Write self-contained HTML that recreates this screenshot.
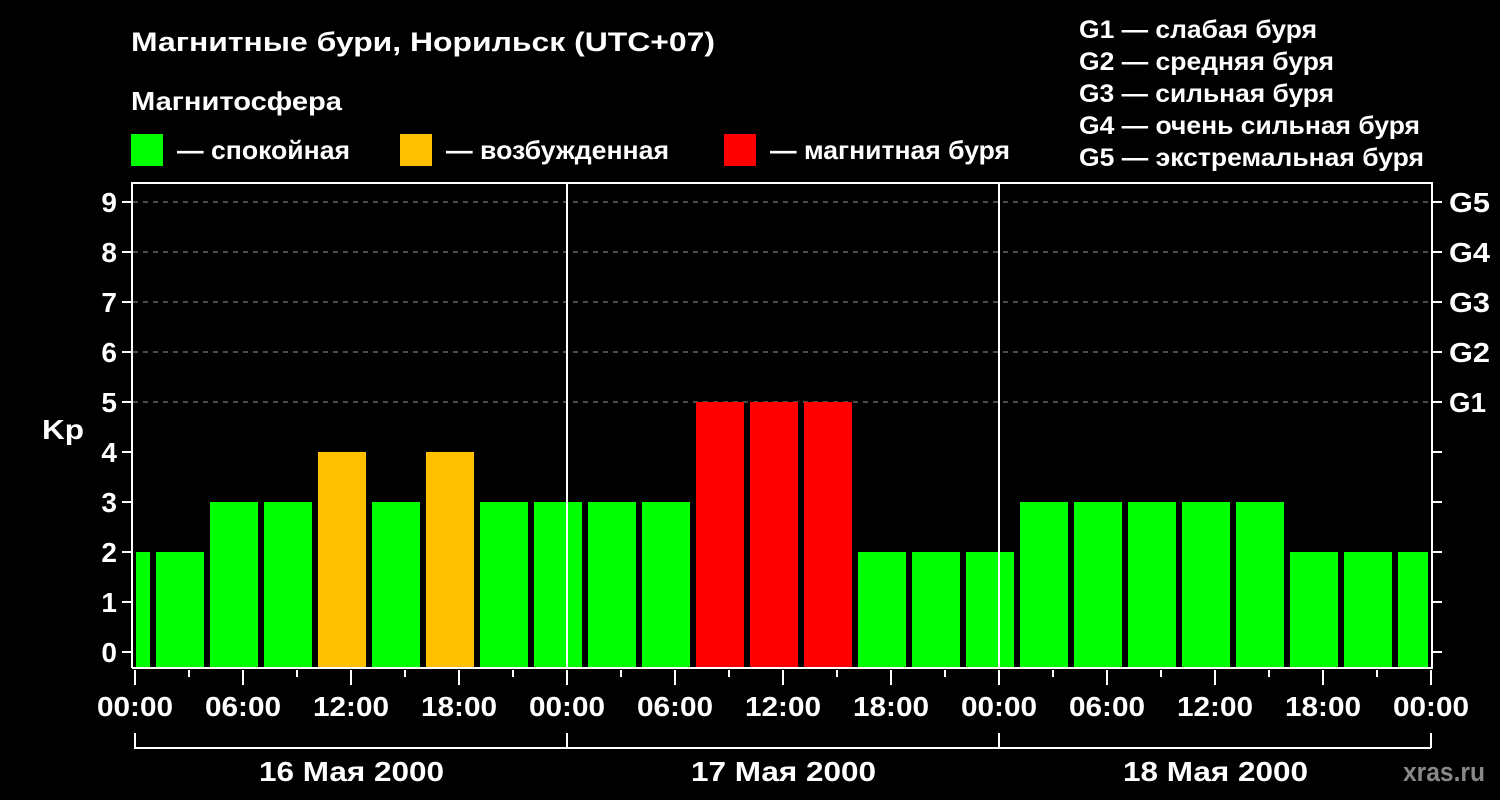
<!DOCTYPE html><html><head><meta charset="utf-8"><style>body{margin:0;background:#000}svg{display:block}text{font-family:"Liberation Sans",sans-serif;font-weight:bold;fill:#fff}</style></head><body>
<svg width="1500" height="800" viewBox="0 0 1500 800">
<rect width="1500" height="800" fill="#000"/>
<g lengthAdjust="spacingAndGlyphs">
<text x="131" y="51" font-size="27" textLength="584" lengthAdjust="spacingAndGlyphs">Магнитные бури, Норильск (UTC+07)</text>
<text x="131" y="110" font-size="26" textLength="211" lengthAdjust="spacingAndGlyphs">Магнитосфера</text>
<rect x="131" y="134" width="32" height="32" fill="#00ff00"/><text x="177" y="159" font-size="26" textLength="173" lengthAdjust="spacingAndGlyphs">— спокойная</text>
<rect x="400" y="134" width="32" height="32" fill="#ffc000"/><text x="446" y="159" font-size="26" textLength="223" lengthAdjust="spacingAndGlyphs">— возбужденная</text>
<rect x="724" y="134" width="32" height="32" fill="#ff0000"/><text x="770" y="159" font-size="26" textLength="240" lengthAdjust="spacingAndGlyphs">— магнитная буря</text>
<g font-size="25"><text x="1079" y="38" textLength="238" lengthAdjust="spacingAndGlyphs">G1 — слабая буря</text><text x="1079" y="70" textLength="255" lengthAdjust="spacingAndGlyphs">G2 — средняя буря</text><text x="1079" y="102" textLength="255" lengthAdjust="spacingAndGlyphs">G3 — сильная буря</text><text x="1079" y="134" textLength="341" lengthAdjust="spacingAndGlyphs">G4 — очень сильная буря</text><text x="1079" y="166" textLength="345" lengthAdjust="spacingAndGlyphs">G5 — экстремальная буря</text></g>
</g>
<g stroke="#999" stroke-width="1" stroke-dasharray="5,5"><line x1="133" y1="202" x2="1432" y2="202"/><line x1="133" y1="252" x2="1432" y2="252"/><line x1="133" y1="302" x2="1432" y2="302"/><line x1="133" y1="352" x2="1432" y2="352"/><line x1="133" y1="402" x2="1432" y2="402"/></g>
<g>
<rect x="136" y="552" width="14" height="116" fill="#00ff00"/>
<rect x="156" y="552" width="48" height="116" fill="#00ff00"/>
<rect x="210" y="502" width="48" height="166" fill="#00ff00"/>
<rect x="264" y="502" width="48" height="166" fill="#00ff00"/>
<rect x="318" y="452" width="48" height="216" fill="#ffc000"/>
<rect x="372" y="502" width="48" height="166" fill="#00ff00"/>
<rect x="426" y="452" width="48" height="216" fill="#ffc000"/>
<rect x="480" y="502" width="48" height="166" fill="#00ff00"/>
<rect x="534" y="502" width="48" height="166" fill="#00ff00"/>
<rect x="588" y="502" width="48" height="166" fill="#00ff00"/>
<rect x="642" y="502" width="48" height="166" fill="#00ff00"/>
<rect x="696" y="402" width="48" height="266" fill="#ff0000"/>
<rect x="750" y="402" width="48" height="266" fill="#ff0000"/>
<rect x="804" y="402" width="48" height="266" fill="#ff0000"/>
<rect x="858" y="552" width="48" height="116" fill="#00ff00"/>
<rect x="912" y="552" width="48" height="116" fill="#00ff00"/>
<rect x="966" y="552" width="48" height="116" fill="#00ff00"/>
<rect x="1020" y="502" width="48" height="166" fill="#00ff00"/>
<rect x="1074" y="502" width="48" height="166" fill="#00ff00"/>
<rect x="1128" y="502" width="48" height="166" fill="#00ff00"/>
<rect x="1182" y="502" width="48" height="166" fill="#00ff00"/>
<rect x="1236" y="502" width="48" height="166" fill="#00ff00"/>
<rect x="1290" y="552" width="48" height="116" fill="#00ff00"/>
<rect x="1344" y="552" width="48" height="116" fill="#00ff00"/>
<rect x="1398" y="552" width="30" height="116" fill="#00ff00"/>
</g>
<g stroke="#fff" stroke-width="2" fill="none">
<path d="M132 668V183H1432V668H132"/>
<line x1="567" y1="183" x2="567" y2="668"/><line x1="999" y1="183" x2="999" y2="668"/>
<path d="M122 202h9M122 252h9M122 302h9M122 352h9M122 402h9M122 452h9M122 502h9M122 552h9M122 602h9M122 652h9"/>
<path d="M1433 202h9M1433 252h9M1433 302h9M1433 352h9M1433 402h9M1433 452h9M1433 502h9M1433 552h9M1433 602h9M1433 652h9"/>
<path d="M135 670v15M189 670v7M243 670v15M297 670v7M351 670v15M405 670v7M459 670v15M513 670v7M567 670v15M621 670v7M675 670v15M729 670v7M783 670v15M837 670v7M891 670v15M945 670v7M999 670v15M1053 670v7M1107 670v15M1161 670v7M1215 670v15M1269 670v7M1323 670v15M1377 670v7M1431 670v15"/>
<path d="M135 733v15H1431M567 733v15M999 733v15M1431 733v15"/>
</g>
<g font-size="28" text-anchor="end"><text x="117" y="212">9</text><text x="117" y="262">8</text><text x="117" y="312">7</text><text x="117" y="362">6</text><text x="117" y="412">5</text><text x="117" y="462">4</text><text x="117" y="512">3</text><text x="117" y="562">2</text><text x="117" y="612">1</text><text x="117" y="662">0</text></g>
<text x="42" y="439" font-size="28" textLength="42" lengthAdjust="spacingAndGlyphs">Kp</text>
<g font-size="28"><text x="1449" y="212" textLength="41" lengthAdjust="spacingAndGlyphs">G5</text><text x="1449" y="262" textLength="41" lengthAdjust="spacingAndGlyphs">G4</text><text x="1449" y="312" textLength="41" lengthAdjust="spacingAndGlyphs">G3</text><text x="1449" y="362" textLength="41" lengthAdjust="spacingAndGlyphs">G2</text><text x="1449" y="412" textLength="37" lengthAdjust="spacingAndGlyphs">G1</text></g>
<g font-size="28">
<text x="97" y="716" textLength="76" lengthAdjust="spacingAndGlyphs">00:00</text><text x="205" y="716" textLength="76" lengthAdjust="spacingAndGlyphs">06:00</text><text x="313" y="716" textLength="76" lengthAdjust="spacingAndGlyphs">12:00</text><text x="421" y="716" textLength="76" lengthAdjust="spacingAndGlyphs">18:00</text><text x="529" y="716" textLength="76" lengthAdjust="spacingAndGlyphs">00:00</text><text x="637" y="716" textLength="76" lengthAdjust="spacingAndGlyphs">06:00</text><text x="745" y="716" textLength="76" lengthAdjust="spacingAndGlyphs">12:00</text><text x="853" y="716" textLength="76" lengthAdjust="spacingAndGlyphs">18:00</text><text x="961" y="716" textLength="76" lengthAdjust="spacingAndGlyphs">00:00</text><text x="1069" y="716" textLength="76" lengthAdjust="spacingAndGlyphs">06:00</text><text x="1177" y="716" textLength="76" lengthAdjust="spacingAndGlyphs">12:00</text><text x="1285" y="716" textLength="76" lengthAdjust="spacingAndGlyphs">18:00</text><text x="1393" y="716" textLength="76" lengthAdjust="spacingAndGlyphs">00:00</text>
<text x="259" y="781" textLength="185" lengthAdjust="spacingAndGlyphs">16 Мая 2000</text><text x="691" y="781" textLength="185" lengthAdjust="spacingAndGlyphs">17 Мая 2000</text><text x="1123" y="781" textLength="185" lengthAdjust="spacingAndGlyphs">18 Мая 2000</text></g>
<text x="1403" y="781" font-size="27" textLength="82" lengthAdjust="spacingAndGlyphs" style="fill:#888">xras.ru</text>
</svg></body></html>
